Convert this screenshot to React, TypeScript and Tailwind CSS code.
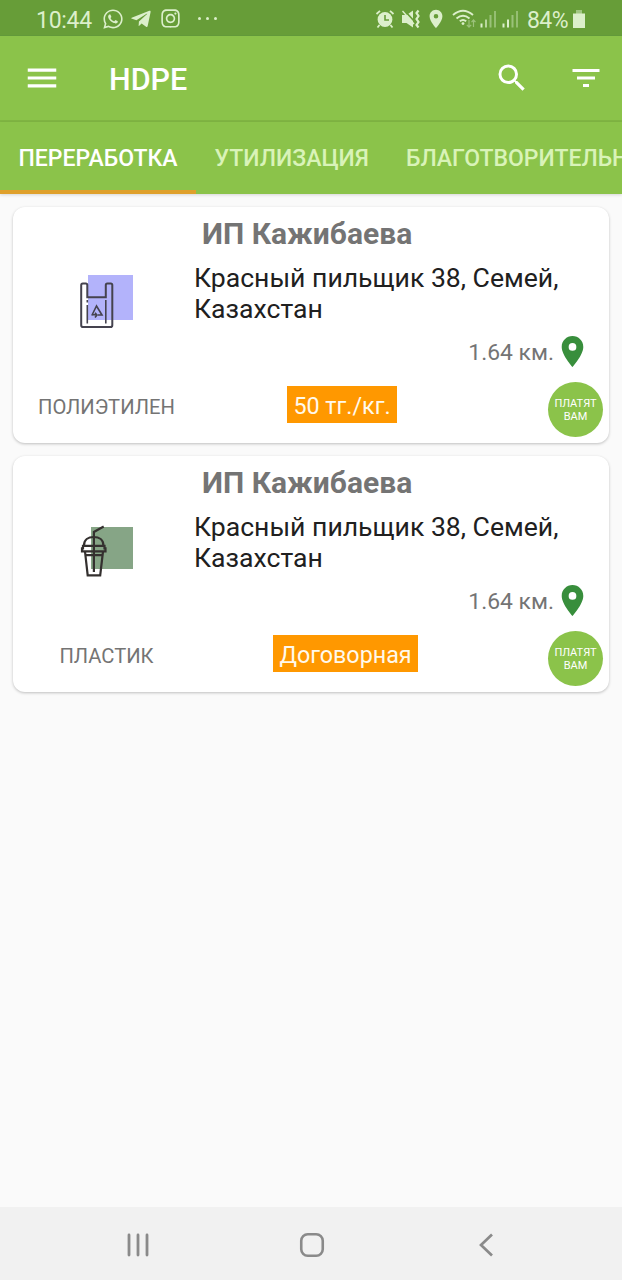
import type { ReactNode } from 'react';
import { FaInstagram, FaTelegramPlane, FaWhatsapp } from 'react-icons/fa';
import { MdFilterList, MdLocationOn, MdMenu, MdSearch } from 'react-icons/md';

interface Offer {
  id: number;
  company: string;
  address: string;
  distance: string;
  material: string;
  price: string;
  priceClass: string;
  icon: ReactNode;
}

// ── Material icons ──────────────────────────────────────────────────────────
function BagIcon() {
  return (
    <svg width="56" height="56" viewBox="0 0 56 56" fill="none">
      <rect x="10" y="1" width="45" height="45" fill="#b3b3fb" />
      <path
        d="M4.800 9.500h3q1.500 0 1.500 1.500V23.300h18.500V11q0-1.500 1.500-1.500h3.500q1.500 0 1.500 1.500V51.200q0 1.800-1.800 1.800H5Q3.200 53 3.200 51.200V11.200q0-1.700 1.600-1.700z"
        stroke="#45434f"
        strokeWidth="2"
      />
      <path d="M9.300 26v2.500M9.300 31v18.500M27.800 26v23.500" stroke="#45434f" strokeWidth="1.600" />
      <path d="M13.800 41.500l4.700-9.500 5.500 9h-4M13.800 40.800h4.500M17 38.800l2 2.200-2 2.500" stroke="#45434f" strokeWidth="1.600" />
    </svg>
  );
}

function CupIcon() {
  return (
    <svg width="56" height="56" viewBox="0 0 56 56" fill="none">
      <rect x="13" y="4" width="42" height="42" fill="#86a586" />
      <g stroke="#34302f" strokeWidth="2.200">
        <path d="M15.900 49V9l9.800-5.500" />
        <path d="M6 22.500C6 17 10.200 14 15.700 14s9.700 3 9.700 8.500" />
        <path d="M5 22.900h21.500v2.500h1v3H4v-3h1z" />
        <path d="M7 28.500L9.700 52.300h12.500l2.800-23.800M7.700 32.200h16.700" />
      </g>
    </svg>
  );
}

const OFFERS: Offer[] = [
  {
    id: 1,
    company: 'ИП Кажибаева',
    address: 'Красный пильщик 38, Семей, Казахстан',
    distance: '1.64 км.',
    material: 'ПОЛИЭТИЛЕН',
    price: '50 тг./кг.',
    priceClass: 'mr-[6px]',
    icon: <BagIcon />,
  },
  {
    id: 2,
    company: 'ИП Кажибаева',
    address: 'Красный пильщик 38, Семей, Казахстан',
    distance: '1.64 км.',
    material: 'ПЛАСТИК',
    price: 'Договорная',
    priceClass: 'ml-px',
    icon: <CupIcon />,
  },
];

const TABS = ['ПЕРЕРАБОТКА', 'УТИЛИЗАЦИЯ', 'БЛАГОТВОРИТЕЛЬНОСТЬ'];

// ── Status bar ──────────────────────────────────────────────────────────────
function AlarmIcon() {
  return (
    <svg width="20" height="20" viewBox="0 0 20 20" fill="none" className="ml-[158px]">
      <circle cx="10" cy="10.500" r="7.400" fill="currentColor" />
      <path d="M1.500 5L5 1.800M18.500 5L15 1.800M4.500 16l-2 2.500M15.500 16l2 2.500" stroke="currentColor" strokeWidth="1.800" />
      <path d="M10 6v5h4" stroke="#679d38" strokeWidth="1.600" />
    </svg>
  );
}

function VibrateIcon() {
  return (
    <svg width="20" height="20" viewBox="0 0 20 20" fill="none" className="ml-1.5">
      <path d="M1 6h4.500L12 1.500v17L5.500 14H1z" fill="currentColor" />
      <path d="M2.500 0.500l11 12" stroke="#679d38" strokeWidth="1.800" />
      <path d="M1.500 2L13 15" stroke="currentColor" strokeWidth="1.400" />
      <path d="M17.500 1.500l-2 2.500 2 3-2 3 2 3-2 3 2 2.500" stroke="currentColor" strokeWidth="2.200" />
    </svg>
  );
}

function WifiIcon() {
  return (
    <svg width="24" height="20" viewBox="0 0 24 20" fill="none" className="ml-[5px]">
      <path d="M1 6Q11 -2.500 21 6M4.500 9.500Q11 4 17.500 9.500M7.800 12.300Q11 9.500 14.200 12.300" stroke="currentColor" strokeWidth="1.900" />
      <circle cx="11" cy="14.600" r="1.400" fill="currentColor" />
      <path d="M17 11v7M14.800 15.800l2.200 2.400 2.200-2.400M21.500 18v-7M19.500 13.200l2-2.200 2 2.200" stroke="currentColor" strokeWidth="1.200" opacity=".45" />
    </svg>
  );
}

function SignalIcon({ className, bars }: { className: string; bars: number }) {
  return (
    <svg width="17" height="18" viewBox="0 0 17 18" fill="currentColor" className={className}>
      <rect x="0.500" y="13.500" width="2" height="4" />
      <rect x="5" y="9.500" width="2" height="8" opacity={bars > 1 ? 1 : 0.7} />
      <rect x="9.500" y="5" width="2" height="12.500" opacity=".45" />
      <rect x="14" y="1" width="2" height="16.500" opacity=".4" />
    </svg>
  );
}

function StatusBar() {
  return (
    <div className="flex h-9 items-center border-b border-[#62993a] bg-[#679d38] pt-0.5 pl-9 text-[#dcefcb]">
      <span className="w-[57px] pt-1 text-[23px] leading-7 tracking-[-0.3px]">10:44</span>
      <FaWhatsapp size={22} className="ml-[9px]" />
      <FaTelegramPlane size={22} className="ml-[6px]" />
      <FaInstagram size={21} className="ml-2" />
      <div className="ml-[17px] flex gap-[5px]">
        <i className="h-[3px] w-[3px] rounded-full bg-current" />
        <i className="h-[3px] w-[3px] rounded-full bg-current" />
        <i className="h-[3px] w-[3px] rounded-full bg-current" />
      </div>
      <AlarmIcon />
      <VibrateIcon />
      <MdLocationOn size={22} className="ml-1" />
      <WifiIcon />
      <SignalIcon className="ml-1" bars={1} />
      <SignalIcon className="ml-[5px]" bars={2} />
      <span className="ml-2 w-[46px] pt-1 text-[23px] leading-7 tracking-[-0.6px]">84%</span>
      <svg width="12" height="18" viewBox="0 0 12 18" fill="currentColor">
        <path d="M3 0h6v4H3z" opacity=".5" />
        <path d="M0 3.500h12V18H0z" />
      </svg>
    </div>
  );
}

// ── Offer card ──────────────────────────────────────────────────────────────
function OfferCard({ offer }: { offer: Offer }) {
  return (
    <article className="flex h-[236px] flex-col rounded-xl bg-white shadow-[0_1px_3px_rgba(0,0,0,0.24)]">
      <h2 className="mt-[9px] ml-[189px] text-[30px] leading-[35px] font-bold whitespace-nowrap text-[#747474]">
        {offer.company}
      </h2>
      <div className="mt-[11px] flex">
        <div className="flex w-[181px] shrink-0 pt-3 pl-[65px]">{offer.icon}</div>
        <p className="w-[385px] text-[26.6px] leading-[31px] text-[#202020]">{offer.address}</p>
      </div>
      <div className="flex h-[43px] items-center justify-end pr-[18px]">
        <span className="pt-1 text-[22.9px] text-[#747474]">{offer.distance}</span>
        <MdLocationOn size={37} className="text-[#388e3c]" />
      </div>
      <div className="mt-2 flex h-[56px] items-center">
        <div className="w-[187px] pb-1 text-center text-[20.2px] text-[#747474]">{offer.material}</div>
        <div className="flex flex-1 justify-center">
          <span className={`mb-[9px] h-[37px] bg-[#ff9800] px-1.5 text-[23.3px] leading-[40px] text-[#fff9ec] ${offer.priceClass}`}>
            {offer.price}
          </span>
        </div>
        <div className="mr-1.5 ml-[58px] flex h-[55px] w-[55px] flex-col items-center justify-center rounded-full bg-[#8bc34a] pt-[3px] text-[11px] leading-[12.5px] text-white">
          <span>ПЛАТЯТ</span>
          <span>ВАМ</span>
        </div>
      </div>
    </article>
  );
}

export default function App() {
  return (
    <div className="flex h-[1280px] w-[622px] flex-col overflow-hidden bg-[#fafafa] font-[Roboto,sans-serif]">
      <StatusBar />

      {/* ── Toolbar ─────────────────────────────────────────────────────── */}
      <header className="flex h-[86px] shrink-0 items-center border-b-2 border-[#80b643] bg-[#8bc34a] pl-[23px] text-white">
        <MdMenu size={38} />
        <h1 className="ml-12 flex-1 pt-1 text-[30.5px] font-medium">HDPE</h1>
        <MdSearch size={36} />
        <MdFilterList size={36} className="mr-[18px] ml-[38px]" />
      </header>

      {/* ── Tabs ────────────────────────────────────────────────────────── */}
      <nav className="flex h-[72px] shrink-0 bg-[#8bc34a] text-[23px] font-medium whitespace-nowrap shadow-[0_1px_3px_rgba(0,0,0,0.15)]">
        {TABS.map((tab, i) => (
          <button
            key={tab}
            className={`flex shrink-0 items-center border-b-4 px-[18.500px] pt-[7px] ${
              i === 0 ? 'border-[#dfa02c] text-white' : 'border-transparent text-[#d9f3b8]'
            }`}
          >
            {tab}
          </button>
        ))}
      </nav>

      <main className="flex flex-1 flex-col gap-[13px] px-[13px] pt-[13px]">
        {OFFERS.map((offer) => (
          <OfferCard key={offer.id} offer={offer} />
        ))}
      </main>

      {/* ── System navigation ───────────────────────────────────────────── */}
      <footer className="flex h-[73px] shrink-0 items-center bg-[#f1f1f1] pt-0.5 pl-[126px] text-[#8a8a8a]">
        <svg width="24" height="26" viewBox="0 0 24 26" stroke="currentColor" strokeWidth="2.800" strokeLinecap="round">
          <path d="M3 3v20M12 3v20M21 3v20" />
        </svg>
        <svg width="26" height="26" viewBox="0 0 26 26" fill="none" stroke="currentColor" strokeWidth="2.600" className="ml-[149px]">
          <rect x="2.250" y="2.250" width="21.500" height="21.500" rx="6.500" />
        </svg>
        <svg width="18" height="26" viewBox="0 0 18 26" fill="none" stroke="currentColor" strokeWidth="2.700" className="ml-[152px]">
          <path d="M15 2.500L4 13l11 10.500" />
        </svg>
      </footer>
    </div>
  );
}
